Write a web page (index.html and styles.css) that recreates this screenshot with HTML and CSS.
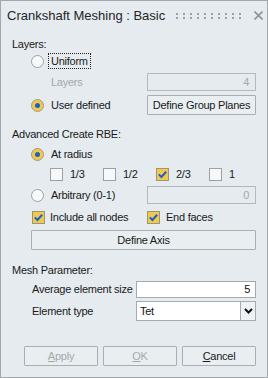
FILE: index.html
```html
<!DOCTYPE html>
<html lang="en">
<head>
    <meta charset="UTF-8">
    <title>Crankshaft Meshing : Basic</title>
    <link rel="stylesheet" href="styles.css">
</head>
<body>
    <div class="window">
        <div class="titlebar">
            <span class="title">Crankshaft Meshing : Basic</span>
            <svg class="grip" width="65" height="6" viewBox="0 0 65 6">
                <defs>
                    <pattern id="dots" width="7" height="4" patternUnits="userSpaceOnUse">
                        <rect x="0" y="0" width="2" height="2" fill="#9ba1a6"/>
                    </pattern>
                </defs>
                <rect x="0" y="0" width="65" height="6" fill="url(#dots)"/>
            </svg>
            <svg class="close" width="9" height="9" viewBox="0 0 9 9">
                <path d="M0.5 0.5 L8.5 8.5 M8.5 0.5 L0.5 8.5" stroke="#8d9398" stroke-width="1.6" fill="none"/>
            </svg>
        </div>

        <div class="content">
            <div class="group-label">Layers:</div>
            <div class="row option row-uniform">
                <span class="radio"></span>
                <span class="opt-label focus">Uniform</span>
            </div>
            <div class="row row-layers">
                <span class="sub-label disabled">Layers</span>
                <span class="field disabled">4</span>
            </div>
            <div class="row option row-user">
                <span class="radio checked"></span>
                <span class="opt-label">User defined</span>
                <span class="btn btn-planes">Define Group Planes</span>
            </div>

            <div class="group-label group-rbe">Advanced Create RBE:</div>
            <div class="row option row-radius">
                <span class="radio checked"></span>
                <span class="opt-label">At radius</span>
            </div>
            <div class="row fractions">
                <label class="check-item"><span class="check"></span>1/3</label>
                <label class="check-item"><span class="check"></span>1/2</label>
                <label class="check-item"><span class="check on"><svg width="11" height="11" viewBox="0 0 11 11"><polyline points="1.8,5.4 4.4,8 9.2,2.8" fill="none" stroke="#1e5fcf" stroke-width="2"/></svg></span>2/3</label>
                <label class="check-item"><span class="check"></span>1</label>
            </div>
            <div class="row option row-arbitrary">
                <span class="radio"></span>
                <span class="opt-label">Arbitrary (0-1)</span>
                <span class="field disabled">0</span>
            </div>
            <div class="row row-include">
                <label class="check-item wide"><span class="check on"><svg width="11" height="11" viewBox="0 0 11 11"><polyline points="1.8,5.4 4.4,8 9.2,2.8" fill="none" stroke="#1e5fcf" stroke-width="2"/></svg></span>Include all nodes</label>
                <label class="check-item"><span class="check on"><svg width="11" height="11" viewBox="0 0 11 11"><polyline points="1.8,5.4 4.4,8 9.2,2.8" fill="none" stroke="#1e5fcf" stroke-width="2"/></svg></span>End faces</label>
            </div>
            <div class="row row-axis">
                <span class="btn btn-axis">Define Axis</span>
            </div>

            <div class="group-label group-mesh">Mesh Parameter:</div>
            <div class="row param row-size">
                <span class="param-label">Average element size</span>
                <span class="field input">5</span>
            </div>
            <div class="row param row-type">
                <span class="param-label">Element type</span>
                <div class="select">
                    <span class="select-value">Tet</span>
                    <span class="select-arrow">
                        <svg width="9" height="6" viewBox="0 0 9 6"><polyline points="1,1 4.5,4.5 8,1" fill="none" stroke="#111" stroke-width="2"/></svg>
                    </span>
                </div>
            </div>
        </div>

        <div class="footer">
            <span class="btn btn-foot disabled"><u>A</u>pply</span>
            <span class="btn btn-foot disabled"><u>O</u>K</span>
            <span class="btn btn-foot"><u>C</u>ancel</span>
        </div>
    </div>
</body>
</html>
```

FILE: styles.css
```css
* {
    box-sizing: border-box;
}

html, body {
    margin: 0;
    padding: 0;
}

body {
    width: 268px;
    height: 378px;
    background-color: #e5ebef;
    font-family: "Liberation Sans", Arial, sans-serif;
    font-size: 11px;
    letter-spacing: -0.25px;
    color: #1a1a1a;
    white-space: nowrap;
}

.window {
    width: 268px;
    height: 378px;
    border: 1px solid #a2a8ac;
    background-color: #e5ebef;
    display: flex;
    flex-direction: column;
}

/* title bar */
.titlebar {
    height: 29px;
    display: flex;
    align-items: center;
    padding-left: 6px;
}

.title {
    font-size: 13px;
    letter-spacing: 0;
    color: #252525;
}

.grip {
    margin-left: auto;
    margin-right: 13px;
}

.close {
    margin-right: 4px;
}

/* body */
.content {
    padding: 0 11px;
    display: flex;
    flex-direction: column;
}

.group-label {
    height: 16px;
    line-height: 16px;
    margin-top: 6px;
}

.group-rbe {
    margin-top: 9px;
}

.group-mesh {
    margin-top: 12px;
}

.row {
    display: flex;
    align-items: center;
}

.option {
    padding-left: 19px;
}

.row-uniform {
    height: 18px;
}

.row-layers {
    height: 22px;
    margin-top: 1px;
    padding-left: 39px;
}

.row-user {
    height: 24px;
}

.row-radius {
    height: 18px;
    margin-top: 3px;
}

.fractions {
    height: 18px;
    margin-top: 2px;
    padding-left: 38px;
    display: grid;
    grid-template-columns: repeat(4, 53px);
    align-items: center;
}

.row-arbitrary {
    height: 20px;
    margin-top: 2px;
}

.row-include {
    height: 18px;
    margin-top: 3px;
    padding-left: 20px;
}

.row-axis {
    margin-top: 4px;
    padding-left: 19px;
}

.param {
    padding-left: 20px;
}

.param-label {
    flex: none;
}

.row-size {
    height: 18px;
    margin-top: 2px;
}

.row-type {
    height: 20px;
    margin-top: 3px;
}

.disabled {
    color: #a3a9ad;
}

/* radios */
.radio {
    width: 13px;
    height: 13px;
    flex: none;
    border-radius: 50%;
    border: 1px solid #9ca2a6;
    background-color: #f7f9fa;
    display: flex;
    align-items: center;
    justify-content: center;
}

.radio.checked {
    background-color: #f2c84f;
    border-color: #a59c7a;
}

.radio.checked::after {
    content: "";
    width: 5px;
    height: 5px;
    border-radius: 50%;
    background-color: #1e5fcf;
}

.opt-label {
    margin-left: 7px;
}

.focus {
    margin-left: 4px;
    padding: 1px 2px;
    border: 1px dotted #222;
}

/* checkboxes */
.check-item {
    display: flex;
    align-items: center;
    gap: 7px;
}

.check-item.wide {
    width: 115px;
}

.row-include .check-item {
    gap: 6px;
}

.row-include .check-item.wide {
    gap: 5px;
}

.check {
    width: 13px;
    height: 13px;
    flex: none;
    border: 1px solid #9aa0a4;
    background-color: #f6f8f9;
    display: flex;
    align-items: center;
    justify-content: center;
}

.check.on {
    background-color: #f2c84f;
    border-color: #9c9677;
}

/* fields */
.field {
    width: 109px;
    height: 18px;
    margin-left: auto;
    border: 1px solid #b4b9bd;
    text-align: right;
    padding-right: 6px;
    line-height: 16px;
}

.field.input {
    width: 120px;
    height: 17px;
    line-height: 15px;
    background-color: #fff;
    border-color: #a5aaae;
    color: #111;
    padding-right: 5px;
}

.select {
    width: 120px;
    height: 20px;
    margin-left: auto;
    display: flex;
    border: 1px solid #a5aaae;
}

.select-value {
    flex: 1;
    background-color: #fff;
    padding-left: 3px;
    line-height: 18px;
    color: #111;
}

.select-arrow {
    width: 15px;
    border-left: 1px solid #a5aaae;
    background-color: #eef2f4;
    display: flex;
    align-items: center;
    justify-content: center;
}

/* buttons */
.btn {
    height: 20px;
    border: 1px solid #a9aeb2;
    border-radius: 1px;
    background-color: #e9eef1;
    display: flex;
    align-items: center;
    justify-content: center;
}

.btn-planes {
    width: 109px;
    margin-left: auto;
}

.btn-axis {
    flex: 1;
}

.footer {
    margin-top: auto;
    padding: 0 11px 11px;
    display: flex;
    justify-content: flex-end;
    gap: 5px;
}

.btn-foot {
    width: 74px;
}
```
